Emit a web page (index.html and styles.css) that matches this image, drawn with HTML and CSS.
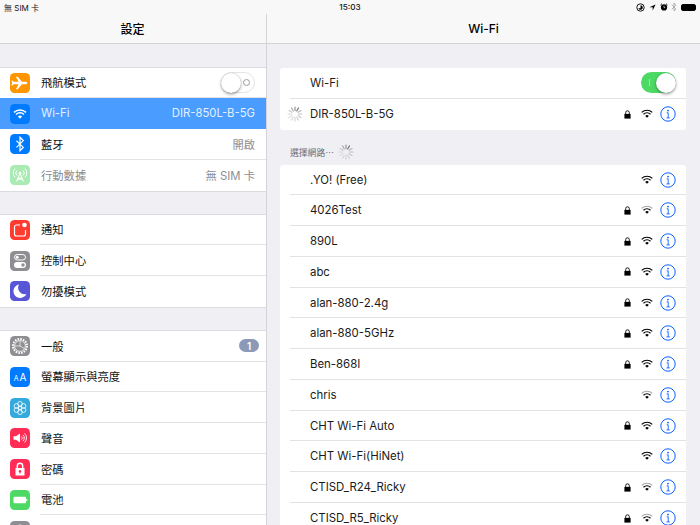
FILE: index.html
```html
<!DOCTYPE html>
<html lang="zh-Hant">
<head>
<meta charset="utf-8">
<title>設定 Wi-Fi</title>
<link rel="stylesheet" href="styles.css">
</head>
<body>
<svg class="defs" width="0" height="0" aria-hidden="true">
  <symbol id="spin" viewBox="0 0 16 16">
    <g stroke-width="1.1" stroke-linecap="round" fill="none">
      <path d="M8 1v3.6" stroke="#8a8a8a"/>
      <path d="M11.5 1.9l-1.8 3.1" stroke="#6f6f6f"/>
      <path d="M14.1 4.5l-3.1 1.8" stroke="#b4b4b4"/>
      <path d="M15 8h-3.6" stroke="#c0c0c0"/>
      <path d="M14.1 11.5l-3.1-1.8" stroke="#c8c8c8"/>
      <path d="M11.5 14.1l-1.8-3.1" stroke="#d0d0d0"/>
      <path d="M8 15v-3.6" stroke="#d4d4d4"/>
      <path d="M4.5 14.1l1.8-3.1" stroke="#d8d8d8"/>
      <path d="M1.9 11.5l3.1-1.8" stroke="#dcdcdc"/>
      <path d="M1 8h3.6" stroke="#d8d8d8"/>
      <path d="M1.9 4.5l3.1 1.8" stroke="#c8c8c8"/>
      <path d="M4.5 1.9l1.8 3.1" stroke="#a8a8a8"/>
    </g>
  </symbol>
  <symbol id="lock" viewBox="0 0 7 9">
    <path d="M0.4 3.9h6.2v4.7H.4z" fill="#000"/>
    <path d="M1.7 4V2.6a1.8 1.8 0 0 1 3.6 0V4" fill="none" stroke="#000" stroke-width=".9"/>
  </symbol>
  <symbol id="info" viewBox="0 0 16 16">
    <circle cx="8" cy="8" r="7.2" fill="none" stroke="#0a60ff" stroke-width="1"/>
    <circle cx="8" cy="4.6" r=".9" fill="#0a60ff"/>
    <path d="M6.7 6.8H8.2V11.8M6.5 11.9H9.8" fill="none" stroke="#0a60ff" stroke-width=".9"/>
  </symbol>
  <symbol id="wifi" viewBox="0 0 12 10">
    <path d="M.7 3.4a7.6 7.6 0 0 1 10.6 0" fill="none" stroke="#000" stroke-width="1.2"/>
    <path d="M2.5 5.2a5 5 0 0 1 7 0" fill="none" stroke="#000" stroke-width="1.2"/>
    <path d="M4.2 6.9a2.6 2.6 0 0 1 3.6 0L6 8.8z" fill="#000"/>
  </symbol>
  <symbol id="wifi-weak" viewBox="0 0 12 10">
    <path d="M.7 3.4a7.6 7.6 0 0 1 10.6 0" fill="none" stroke="#a8a8a8" stroke-width="1.2"/>
    <path d="M2.5 5.2a5 5 0 0 1 7 0" fill="none" stroke="#000" stroke-width="1.2"/>
    <path d="M4.2 6.9a2.6 2.6 0 0 1 3.6 0L6 8.8z" fill="#000"/>
  </symbol>
</svg>

<div class="status">
  <span class="carrier">無 SIM 卡</span>
  <span class="clock">15:03</span>
  <span class="status-icons">
    <svg class="si-lock" viewBox="0 0 9 9"><circle cx="4.5" cy="4.5" r="3.7" fill="none" stroke="#000" stroke-width=".9"/><path d="M4.5 2.2a2.3 2.3 0 1 1-2.2 3h2.2z" fill="#000"/></svg>
    <svg class="si-loc" viewBox="0 0 8 8"><path d="M7.5.5L.5 3.8h3.7v3.7z" fill="#000"/></svg>
    <svg class="si-alarm" viewBox="0 0 9 9"><circle cx="4.5" cy="5" r="3.5" fill="#000"/><path d="M.5 2.4L2.2.8M8.5 2.4L6.8.8" stroke="#000" stroke-width="1"/><path d="M4.5 3v2.2h1.4" stroke="#fff" stroke-width=".7" fill="none"/></svg>
    <svg class="si-bt" viewBox="0 0 6 11"><path d="M.6 3l4.4 4.6L3 9.900V1.100L5 3.400.6 8" fill="none" stroke="#9a9a9a" stroke-width=".8"/></svg>
    <span class="battery"><span class="battery-fill"></span></span>
  </span>
</div>

<main class="panes">
  <aside class="side">
    <header class="nav">設定</header>
    <div class="scroll side-scroll">
      <section class="group">
        <div class="srow">
          <span class="tile orange"><svg viewBox="0 0 20 20"><path d="M3.6 8.7h5l-2.7-5h1.8l4.2 5h3.6c1 0 1.7.6 1.7 1.3s-.7 1.3-1.7 1.3h-3.6l-4.2 5H5.900l2.700-5h-5L2.400 12.600H1.300L2.200 10 1.300 7.400h1.100z" fill="#fff"/></svg></span>
          <div class="sbody"><span class="slabel">飛航模式</span><span class="switch off"><span class="off-mark"></span><span class="knob"></span></span></div>
        </div>
        <div class="srow selected">
          <span class="tile blue"><svg viewBox="0 0 20 20"><path d="M4 8.400a8.500 8.500 0 0 1 12 0M6 10.500a5.700 5.700 0 0 1 8 0" fill="none" stroke="#fff" stroke-width="1.500"/><path d="M7.900 12.500a3 3 0 0 1 4.200 0L10 14.700z" fill="#fff"/></svg></span>
          <div class="sbody"><span class="slabel">Wi-Fi</span><span class="svalue">DIR-850L-B-5G</span></div>
        </div>
        <div class="srow">
          <span class="tile blue"><svg viewBox="0 0 20 20"><path d="M6.500 6.700l6.800 6.700L10 16.700V3.300l3.300 3.300-6.800 6.800" fill="none" stroke="#fff" stroke-width="1.200"/></svg></span>
          <div class="sbody"><span class="slabel">藍牙</span><span class="svalue">開啟</span></div>
        </div>
        <div class="srow">
          <span class="tile mint"><svg viewBox="0 0 20 20"><g fill="none" stroke="#fff" stroke-width="1"><path d="M7 5.500a3.500 3.500 0 0 0 0 5M13 5.500a3.500 3.500 0 0 1 0 5M5 3.700a6.300 6.300 0 0 0 0 8.600M15 3.700a6.300 6.300 0 0 1 0 8.600M10 8l-3.500 8.500M10 8l3.500 8.500M8 13h4M7 15l5-2M13 15l-5-2"/></g><circle cx="10" cy="8" r="1.300" fill="#fff"/></svg></span>
          <div class="sbody"><span class="slabel dim">行動數據</span><span class="svalue">無 SIM 卡</span></div>
        </div>
      </section>

      <section class="group">
        <div class="srow">
          <span class="tile red"><svg viewBox="0 0 20 20"><path d="M10 5H6.500A2 2 0 0 0 4.500 7v7a2 2 0 0 0 2 2h7a2 2 0 0 0 2-2V10" fill="none" stroke="#fff" stroke-width="1.200"/><circle cx="14.500" cy="5" r="2.300" fill="#fff"/></svg></span>
          <div class="sbody"><span class="slabel">通知</span></div>
        </div>
        <div class="srow">
          <span class="tile gray"><svg viewBox="0 0 20 20"><rect x="4.500" y="3.500" width="11" height="5.500" rx="2.750" fill="none" stroke="#fff"/><circle cx="7.200" cy="6.250" r="1.500" fill="#fff"/><rect x="4" y="11" width="12" height="6" rx="3" fill="#fff"/><circle cx="13" cy="14" r="1.700" fill="#8e8e93"/></svg></span>
          <div class="sbody"><span class="slabel">控制中心</span></div>
        </div>
        <div class="srow">
          <span class="tile purple"><svg viewBox="0 0 20 20"><path d="M9 3.500a6.800 6.800 0 1 0 7.500 9.400A6.500 6.500 0 0 1 9 3.500z" fill="#fff"/></svg></span>
          <div class="sbody"><span class="slabel">勿擾模式</span></div>
        </div>
      </section>

      <section class="group">
        <div class="srow">
          <span class="tile gray"><svg viewBox="0 0 20 20"><circle cx="10" cy="10" r="7" fill="none" stroke="#fff" stroke-width="2" stroke-dasharray="1.600 1.150"/><circle cx="10" cy="10" r="5.400" fill="none" stroke="#fff" stroke-width=".8"/><path d="M10 4.800V10l4.500 2.600M10 10H5" fill="none" stroke="#fff" stroke-width=".7"/></svg></span>
          <div class="sbody"><span class="slabel">一般</span><span class="badge">1</span></div>
        </div>
        <div class="srow">
          <span class="tile blue tile-text"><span class="aa-small">A</span><span class="aa-big">A</span></span>
          <div class="sbody"><span class="slabel">螢幕顯示與亮度</span></div>
        </div>
        <div class="srow">
          <span class="tile cyan"><svg viewBox="0 0 20 20"><g fill="none" stroke="#fff" stroke-width=".8"><circle cx="10" cy="5.800" r="2.300"/><circle cx="10" cy="14.200" r="2.300"/><circle cx="6.400" cy="7.900" r="2.300"/><circle cx="13.600" cy="7.900" r="2.300"/><circle cx="6.400" cy="12.100" r="2.300"/><circle cx="13.600" cy="12.100" r="2.300"/><circle cx="10" cy="10" r="1.600"/></g></svg></span>
          <div class="sbody"><span class="slabel">背景圖片</span></div>
        </div>
        <div class="srow">
          <span class="tile pink"><svg viewBox="0 0 20 20"><path d="M3.500 8.300h2.400L10 5.500v9L5.900 11.700H3.500z" fill="#fff"/><path d="M11.500 8.500a2 2 0 0 1 0 3M13 7a4.200 4.200 0 0 1 0 6M14.600 5.500a6.300 6.300 0 0 1 0 9" fill="none" stroke="#fff" stroke-width=".9"/></svg></span>
          <div class="sbody"><span class="slabel">聲音</span></div>
        </div>
        <div class="srow">
          <span class="tile pink"><svg viewBox="0 0 20 20"><path d="M5.500 9h9v7.500h-9z" fill="#fff"/><path d="M7.300 9.500V7a2.700 2.700 0 0 1 5.400 0v2.500" fill="none" stroke="#fff" stroke-width="1.400"/><circle cx="10" cy="12.300" r="1.200" fill="#ff2d55"/><path d="M9.500 12.500h1v2h-1z" fill="#ff2d55"/></svg></span>
          <div class="sbody"><span class="slabel">密碼</span></div>
        </div>
        <div class="srow">
          <span class="tile green"><svg viewBox="0 0 20 20"><rect x="3.500" y="6.800" width="12.500" height="6.400" rx="1" fill="#fff"/><rect x="16.300" y="8.800" width="1" height="2.400" fill="#fff"/></svg></span>
          <div class="sbody"><span class="slabel">電池</span></div>
        </div>
        <div class="srow">
          <span class="tile gray"><svg viewBox="0 0 20 20"><circle cx="10" cy="6" r="2.500" fill="#fff"/></svg></span>
          <div class="sbody"></div>
        </div>
      </section>
    </div>
  </aside>

  <section class="detail">
    <header class="nav">Wi-Fi</header>
    <div class="scroll detail-scroll">
      <div class="card">
        <div class="nrow">
          <span class="nname">Wi-Fi</span>
          <span class="switch on"><span class="on-mark"></span><span class="knob"></span></span>
        </div>
        <div class="nrow">
          <svg class="spinner row-spinner"><use href="#spin"/></svg>
          <span class="nname current">DIR-850L-B-5G</span>
          <svg class="lock"><use href="#lock"/></svg><svg class="wifi"><use href="#wifi"/></svg><svg class="info"><use href="#info"/></svg>
        </div>
      </div>

      <div class="section-label"><span class="section-text">選擇網路⋯</span><svg class="spinner"><use href="#spin"/></svg></div>

      <div class="card">
        <div class="nrow"><span class="nname">.YO! (Free)</span><svg class="wifi"><use href="#wifi"/></svg><svg class="info"><use href="#info"/></svg></div>
        <div class="nrow"><span class="nname">4026Test</span><svg class="lock"><use href="#lock"/></svg><svg class="wifi"><use href="#wifi-weak"/></svg><svg class="info"><use href="#info"/></svg></div>
        <div class="nrow"><span class="nname">890L</span><svg class="lock"><use href="#lock"/></svg><svg class="wifi"><use href="#wifi"/></svg><svg class="info"><use href="#info"/></svg></div>
        <div class="nrow"><span class="nname">abc</span><svg class="lock"><use href="#lock"/></svg><svg class="wifi"><use href="#wifi"/></svg><svg class="info"><use href="#info"/></svg></div>
        <div class="nrow"><span class="nname">alan-880-2.4g</span><svg class="lock"><use href="#lock"/></svg><svg class="wifi"><use href="#wifi"/></svg><svg class="info"><use href="#info"/></svg></div>
        <div class="nrow"><span class="nname">alan-880-5GHz</span><svg class="lock"><use href="#lock"/></svg><svg class="wifi"><use href="#wifi"/></svg><svg class="info"><use href="#info"/></svg></div>
        <div class="nrow"><span class="nname">Ben-868I</span><svg class="lock"><use href="#lock"/></svg><svg class="wifi"><use href="#wifi"/></svg><svg class="info"><use href="#info"/></svg></div>
        <div class="nrow"><span class="nname">chris</span><svg class="wifi"><use href="#wifi-weak"/></svg><svg class="info"><use href="#info"/></svg></div>
        <div class="nrow"><span class="nname">CHT Wi-Fi Auto</span><svg class="lock"><use href="#lock"/></svg><svg class="wifi"><use href="#wifi"/></svg><svg class="info"><use href="#info"/></svg></div>
        <div class="nrow"><span class="nname">CHT Wi-Fi(HiNet)</span><svg class="wifi"><use href="#wifi"/></svg><svg class="info"><use href="#info"/></svg></div>
        <div class="nrow"><span class="nname">CTISD_R24_Ricky</span><svg class="lock"><use href="#lock"/></svg><svg class="wifi"><use href="#wifi-weak"/></svg><svg class="info"><use href="#info"/></svg></div>
        <div class="nrow"><span class="nname">CTISD_R5_Ricky</span><svg class="lock"><use href="#lock"/></svg><svg class="wifi"><use href="#wifi-weak"/></svg><svg class="info"><use href="#info"/></svg></div>
      </div>
    </div>
  </section>
</main>
</body>
</html>
```

FILE: styles.css
```css
* { box-sizing: border-box; }
html, body { margin: 0; height: 525px; overflow: hidden; }
body {
  display: flex;
  flex-direction: column;
  background: #efeff4;
  color: #111;
  font-family: Inter, "Noto Sans CJK TC", sans-serif;
  font-size: 12px;
}
.defs { position: absolute; }

.status {
  height: 14px;
  flex: none;
  display: grid;
  grid-template-columns: 1fr auto 1fr;
  align-items: center;
  padding: 0 4px;
  background: #f8f8f9;
  font-size: 8px;
  color: #111;
}
.clock { font-size: 8.200px; font-weight: 500; }
.status-icons { display: flex; justify-content: flex-end; align-items: center; gap: 3px; }
.status-icons svg { display: block; }
.si-lock { width: 9px; height: 9px; }
.si-loc { width: 7px; height: 7px; margin-left: 1px; }
.si-alarm { width: 8px; height: 8px; margin-left: 1px; }
.si-bt { width: 6px; height: 10px; }
.battery {
  width: 15px; height: 7px; margin-left: 1px;
  border: 1px solid #000; border-radius: 2px; display: block;
}
.battery-fill { display: block; height: 100%; background: #000; }

.panes { flex: 1; display: flex; min-height: 0; }
.side { width: 267px; flex: none; border-right: 1px solid #d4d4d8; display: flex; flex-direction: column; }
.detail { flex: 1; display: flex; flex-direction: column; min-width: 0; }
.nav {
  height: 30px;
  flex: none;
  display: flex;
  align-items: center;
  justify-content: center;
  background: #f8f8f9;
  border-bottom: 1px solid #d3d3d6;
  font-size: 12px;
  font-weight: 500;
  color: #000;
}
.side .nav { padding-right: 1px; }
.scroll { flex: 1; min-height: 0; overflow: hidden; }
.side-scroll { padding-top: 22.500px; }
.detail-scroll { padding: 24px 14px 0 13px; }

.group {
  background: #fff;
  border-top: 1px solid #dcdce0;
  border-bottom: 1px solid #dcdce0;
  margin-bottom: 22px;
}
.srow { height: 30.750px; display: flex; align-items: center; padding-left: 10px; }
.srow.selected { background: #4a9dff; }
.tile {
  width: 20px; height: 20px; flex: none;
  border-radius: 4.500px;
  display: flex; align-items: center; justify-content: center;
  color: #fff;
}
.tile svg { width: 20px; height: 20px; display: block; }
.orange { background: #ff9500; }
.blue { background: #007aff; }
.mint { background: #a9ebb3; }
.red { background: #ff3b30; }
.gray { background: #8e8e93; }
.purple { background: #5856d6; }
.cyan { background: #34aadc; }
.pink { background: #ff2d55; }
.green { background: #4cd964; }
.tile-text { align-items: baseline; padding-top: 4px; gap: 1px; font-family: Inter, sans-serif; }
.aa-small { font-size: 7px; }
.aa-big { font-size: 10px; }

.sbody {
  flex: 1; min-width: 0; height: 100%;
  margin-left: 10px;
  padding-right: 11px;
  display: flex; align-items: center; justify-content: space-between;
  border-bottom: 1px solid #e3e3e6;
}
.srow:last-child .sbody { border-bottom: 0; }
.selected .sbody { border-bottom-color: transparent; }
.slabel { padding-left: 1px; font-size: 11.300px; color: #111; }
.slabel.dim { color: #8a8a8e; }
.svalue { font-size: 11.300px; color: #8e8e93; }
.selected .slabel, .selected .svalue { color: #e4f0ff; }
.badge {
  width: 20px; height: 13px; border-radius: 7px;
  margin-right: -4px;
  background: #8c9ab7; color: #fff;
  font-size: 10px; font-weight: 600;
  display: flex; align-items: center; justify-content: center;
}

.switch {
  position: relative;
  width: 35px; height: 21px;
  border-radius: 11px;
  display: block;
}
.switch.off { width: 34px; background: #fff; border: 1px solid #e4e4e6; }
.switch.on { background: #4cd964; }
.knob {
  position: absolute;
  width: 20px; height: 20px; border-radius: 50%;
  background: #fff;
  box-shadow: 0 1.500px 3px rgba(0,0,0,.35), 0 0 1px rgba(0,0,0,.3);
}
.off .knob { left: -1px; top: 0; }
.on .knob { right: .5px; top: .5px; }
.off-mark {
  position: absolute; right: 4px; top: 6px;
  width: 7px; height: 7px; border-radius: 50%;
  border: 1px solid #9a9a9a;
}
.on-mark {
  position: absolute; left: 8px; top: 7px;
  width: 1px; height: 7px; background: #a5eab0;
}

.card { background: #fff; border-radius: 3px; padding-left: 10px; }
.nrow {
  height: 30.750px;
  display: flex; align-items: center;
  padding-right: 10px;
  border-bottom: 1px solid #e3e3e6;
}
.nrow:last-child { border-bottom: 0; }
.nname { padding-left: 20px; margin-right: auto; font-size: 11.400px; color: #1a1a1a; }
.nname.current { padding-left: 7px; }
.spinner { width: 16px; height: 16px; display: block; flex: none; }
.row-spinner { margin-left: -3px; }
.lock { width: 7px; height: 9px; margin-right: 10px; display: block; flex: none; }
.wifi { width: 12px; height: 10px; margin-right: 7px; display: block; flex: none; }
.info { width: 16px; height: 16px; display: block; flex: none; }

.section-label {
  height: 35.200px;
  padding: 9px 0 0 10px;
  display: flex; align-items: center; gap: 4px;
  font-size: 8.800px;
  color: #6d6d72;
}
.section-text { margin-top: 2px; }
```
